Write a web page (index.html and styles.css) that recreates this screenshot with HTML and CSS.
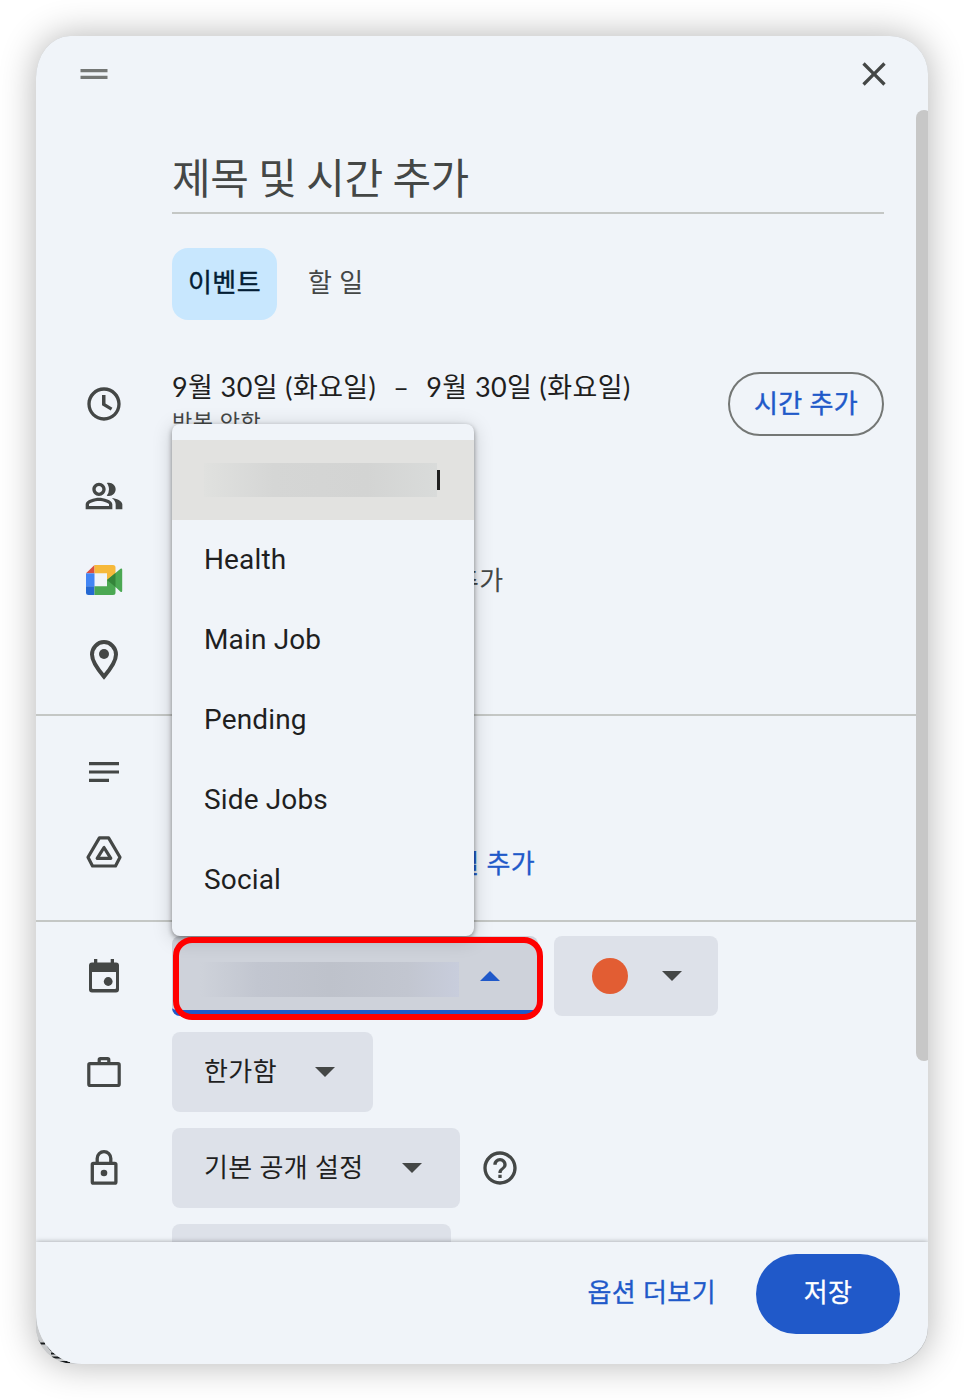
FILE: index.html
```html
<!DOCTYPE html>
<html lang="ko">
<head>
<meta charset="utf-8">
<title>이벤트</title>
<link rel="stylesheet" href="styles.css">
</head>
<body>
<div class="window">
  <svg class="corner" viewBox="0 0 44 60"><path fill="#c9cbcd" d="M0 0h44v60H0z"/><path stroke="#171b1d" stroke-width="2" d="M1 36l2 2M3 39.500h6M12 42l4 5M15 49.500h7M16 53.500h10M22 58h12"/></svg>
  <main class="dialog">
    <header class="header">
      <svg class="handle" viewBox="0 0 28 12"><path fill="#747775" d="M.5 1h27v3.200H.5zM.5 7.700h27V11H.5z"/></svg>
      <svg class="icon" viewBox="0 0 24 24"><path d="M19 6.410L17.590 5 12 10.590 6.410 5 5 6.410 10.590 12 5 17.590 6.410 19 12 13.410 17.590 19 19 17.590 13.410 12z"/></svg>
    </header>
    <div class="content">
      <div class="title"><span>제목 및 시간 추가</span></div>
      <nav class="tabs"><span class="tab selected">이벤트</span><span class="tab">할 일</span></nav>
      <section class="row time">
        <svg class="icon" viewBox="0 0 24 24"><path d="M11.990 2C6.470 2 2 6.480 2 12s4.470 10 9.990 10C17.520 22 22 17.520 22 12S17.520 2 11.990 2zM12 20c-4.420 0-8-3.580-8-8s3.580-8 8-8 8 3.580 8 8-3.580 8-8 8zm.9-13.400h-2.100v6.100l5.250 3.150 1-1.640-4.150-2.450z"/></svg>
        <div class="when">
          <div class="dates"><span>9월 30일 (화요일)</span><span class="dash">–</span><span>9월 30일 (화요일)</span></div>
          <div class="repeat">반복 안함</div>
        </div>
        <span class="add-time">시간 추가</span>
      </section>
      <section class="row">
        <svg class="icon" viewBox="0 0 24 24"><path d="M15 8c0-1.420-.5-2.730-1.330-3.760.42-.14.86-.24 1.330-.24 2.210 0 4 1.790 4 4s-1.790 4-4 4c-.43 0-.84-.09-1.230-.21-.03-.01-.06-.02-.1-.03A5.980 5.980 0 0 0 15 8zm1.660 5.130C18.030 14.060 19 15.320 19 17v3h4v-3c0-2.180-3.580-3.470-6.340-3.870zM9 6c-1.100 0-2 .9-2 2s.9 2 2 2 2-.9 2-2-.9-2-2-2m0-2c2.210 0 4 1.790 4 4s-1.790 4-4 4-4-1.790-4-4 1.790-4 4-4zm0 11c-2.700 0-5.800 1.290-6 2.010V18h12v-1c-.2-.71-3.300-2-6-2m0-2c2.670 0 8 1.340 8 4v3H1v-3c0-2.660 5.330-4 8-4z"/></svg>
      </section>
      <section class="row meet">
        <svg class="icon" viewBox="0 0 40 40"><path fill="#d94f43" d="M2 13.300L10.500 5v8.300z"/><path fill="#4285f4" d="M2 13.300h8.500v13H2z"/><path fill="#2468d2" d="M2 26.300h8.500V35H4.500Q2 35 2 32.500z"/><path fill="#f6b93b" d="M10.500 5H29q2.500 0 2.500 2.500V20H23v-6.700H10.500z"/><path fill="#4ba853" d="M10.500 26.300H23V20l8.500-7L36.500 8.700q1.700-.8 1.700 1v21q0 2-1.700 1L31.500 27v5.500Q31.500 35 29 35H10.500z"/><path fill="#34853a" d="M23 20l8.500-7v14z"/></svg>
        <span class="meet-label">추가</span>
      </section>
      <section class="row">
        <svg class="icon" viewBox="0 0 40 40"><path fill="none" stroke="#444746" stroke-width="4" d="M20 36.600C13 28.500 8 20.800 8 14.600a12 12.500 0 0 1 24 0C32 20.800 27 28.500 20 36.600z"/><circle cx="20" cy="14" r="5"/></svg>
      </section>
      <section class="group">
        <div class="row">
          <svg class="icon" viewBox="0 0 40 40"><path d="M5 10h30v3.200H5zm0 8.400h30v3.200H5zm0 8.300h20V30H5z"/></svg>
        </div>
        <div class="row">
          <svg class="icon" viewBox="0 0 40 40"><path fill="none" stroke="#444746" stroke-width="3.200" stroke-linejoin="round" d="M15.400 5.900h9.200L36 25.300 31.500 34h-23L4 25.300zM20 15.500l-6.800 10.800h13.600z"/></svg>
          <span class="attach">파일 추가</span>
        </div>
      </section>
      <section class="group options">
        <div class="row">
          <svg class="icon" viewBox="0 0 40 40"><path d="M10 3h3.300v3.500h13.400V3H30v3.500h2q3 0 3 3v24q0 3-3 3H8q-3 0-3-3v-24q0-3 3-3h2zM8 16v16q0 1 1 1h22q1 0 1-1V16z"/><circle cx="24.200" cy="25.500" r="4.400"/></svg>
          <div class="select active"><i class="redacted"></i><svg class="arrow blue" viewBox="0 0 20 10"><path d="M0 10L10 0l10 10z"/></svg></div>
          <div class="select color"><i class="dot"></i><svg class="arrow" viewBox="0 0 20 10"><path d="M0 0h20L10 10z"/></svg></div>
        </div>
        <div class="row">
          <svg class="icon" viewBox="0 0 40 40"><path fill="none" stroke="#444746" stroke-width="3.200" stroke-linejoin="round" d="M6 11.700h28q1.200 0 1.200 1.200v19.400q0 1.200-1.200 1.200H6q-1.200 0-1.200-1.200V12.900q0-1.200 1.200-1.200zM15.200 11.500V7.800q0-1.200 1.200-1.200h7.200q1.200 0 1.200 1.200v3.700"/></svg>
          <div class="select busy"><span>한가함</span><svg class="arrow" viewBox="0 0 20 10"><path d="M0 0h20L10 10z"/></svg></div>
        </div>
        <div class="row">
          <svg class="icon" viewBox="0 0 40 40"><path fill="none" stroke="#444746" stroke-width="3.300" stroke-linejoin="round" d="M9.500 15.300h21.200q1.200 0 1.200 1.200v17.500q0 1.200-1.200 1.200H9.500q-1.200 0-1.200-1.200V16.500q0-1.200 1.200-1.200zM13.200 15V10.500a6.800 6.800 0 0 1 13.600 0V15"/><circle cx="20" cy="25" r="3.300"/></svg>
          <div class="select visibility"><span>기본 공개 설정</span><svg class="arrow" viewBox="0 0 20 10"><path d="M0 0h20L10 10z"/></svg></div>
          <svg class="icon help" viewBox="0 0 24 24"><path d="M11 18h2v-2h-2v2zm1-16C6.480 2 2 6.480 2 12s4.480 10 10 10 10-4.480 10-10S17.520 2 12 2zm0 18c-4.410 0-8-3.590-8-8s3.590-8 8-8 8 3.590 8 8-3.590 8-8 8zm0-14c-2.210 0-4 1.790-4 4h2c0-1.100.9-2 2-2s2 .9 2 2c0 2-3 1.750-3 5h2c0-2.250 3-2.500 3-5 0-2.210-1.790-4-4-4z"/></svg>
        </div>
        <div class="row"><div class="select next"></div></div>
      </section>
    </div>
    <footer class="footer"><span class="more">옵션 더보기</span><span class="save">저장</span></footer>
    <div class="scrollbar"></div>
    <div class="menu">
      <div class="item current"><i class="redacted"></i><i class="edge"></i></div>
      <div class="item"><span>Health</span></div>
      <div class="item"><span>Main Job</span></div>
      <div class="item"><span>Pending</span></div>
      <div class="item"><span>Side Jobs</span></div>
      <div class="item"><span>Social</span></div>
    </div>
    <div class="highlight"></div>
  </main>
</div>
</body>
</html>
```
FILE: styles.css
```css
* { box-sizing: border-box; }
body {
  margin: 0;
  padding: 36px;
  height: 1400px;
  overflow: hidden;
  background: #fff;
  color: #1f1f1f;
  font: 26px/36px Roboto, "Noto Sans CJK KR", sans-serif;
  letter-spacing: .4px;
}
span { white-space: nowrap; }
.window {
  position: relative;
  width: 892px;
  height: 1328px;
  border-radius: 34px 38px 38px 38px / 42px 38px 36px 38px;
  box-shadow: 0 0 36px rgba(0, 0, 0, .3);
  background: #bfc1c3;
  overflow: hidden;
}
.corner { position: absolute; left: 0; bottom: 0; width: 44px; height: 60px; }
.dialog {
  position: relative;
  display: flex;
  flex-direction: column;
  height: 100%;
  overflow: hidden;
  background: #f0f4f9;
  border-radius: 0 0 40px 46px / 0 0 38px 52px;
}
.header { display: flex; flex: none; justify-content: space-between; align-items: center; height: 74px; padding: 2px 34px 0 44px; }
.handle { width: 28px; height: 12px; }
.icon { width: 40px; height: 40px; flex: none; fill: #444746; }
.content { flex: 1; min-height: 0; width: 880px; overflow: hidden; }
.title {
  margin-left: 136px;
  width: 712px;
  height: 104px;
  padding-top: 40px;
  border-bottom: 2px solid #c4c7c5;
  color: #444746;
  font-size: 42px;
  line-height: 60px;
  letter-spacing: -.5px;
}
.tabs { display: flex; margin: 34px 0 32px 136px; height: 72px; }
.tab { padding: 17px 16px; border-radius: 16px; color: #444746; }
.tab.selected { width: 105px; margin-right: 15px; background: #c8e7fe; color: #041e35; -webkit-text-stroke: .4px; }
.row { display: flex; align-items: center; height: 80px; padding-left: 136px; }
.row > .icon:first-child { margin-left: -88px; margin-right: 48px; }
.time { height: 104px; padding-right: 32px; }
.when { flex: 1; align-self: flex-start; padding-top: 17px; }
.dates { display: flex; font-family: Lato, "Noto Sans CJK KR", sans-serif; font-size: 27px; letter-spacing: .4px; }
.dash { margin: 0 17px; }
.repeat { margin-top: 3px; color: #444746; font-size: 22px; line-height: 30px; letter-spacing: .6px; }
.add-time {
  width: 156px;
  height: 64px;
  border: 2px solid #747775;
  border-radius: 32px;
  color: #2059c9;
  -webkit-text-stroke: .4px;
  line-height: 60px;
  text-align: center;
}
.meet { margin-top: 4px; }
.meet-label { margin-left: 283px; padding-top: 1px; color: #444746; }
.attach { margin: 24px 0 0 259px; color: #2059c9; -webkit-text-stroke: .3px; }
.group { margin-top: 14px; padding-top: 16px; border-top: 2px solid #c4c7c5; }
.group + .group { margin-top: 28px; padding-top: 14px; }
.options { display: grid; gap: 16px; }
.select {
  display: flex;
  flex: none;
  align-items: center;
  justify-content: space-between;
  height: 80px;
  padding: 0 38px 0 32px;
  border-radius: 8px;
  background: #dde1e9;
}
.select span { padding-bottom: 1px; }
.arrow { width: 20px; height: 10px; fill: #444746; }
.arrow.blue { fill: #2059c9; }
.active { width: 366px; margin-right: 16px; background: #ced2da; border-bottom: 6px solid #2059c9; padding: 6px 38px 0 28px; }
.redacted { width: 259px; height: 35px; background: linear-gradient(90deg, #ced2da 0, #c2c6d0 22%, #bec2cb 50%, #c2c6d0 80%, #c8cddc); }
.active .redacted { margin-top: 6px; }
.color { width: 164px; padding: 0 36px 0 38px; }
.dot { width: 36px; height: 36px; border-radius: 50%; background: #e25d33; }
.busy { width: 201px; }
.visibility { width: 288px; }
.help { margin-left: 20px; }
.next { width: 279px; }
.footer {
  position: relative;
  display: flex;
  flex: none;
  justify-content: flex-end;
  gap: 40px;
  height: 122px;
  padding: 12px 28px;
  background: #f0f4f9;
  box-shadow: 0 0 5px rgba(0, 0, 0, .35);
  -webkit-text-stroke: .3px;
}
.more { color: #2059c9; line-height: 78px; }
.save { width: 144px; height: 80px; border-radius: 40px; background: #2059c9; color: #fff; line-height: 78px; text-align: center; }
.scrollbar { position: absolute; left: 880px; top: 74px; width: 16px; height: 951px; border-radius: 8px; background: #c7c7c7; }
.menu {
  position: absolute;
  left: 136px;
  top: 388px;
  width: 302px;
  height: 512px;
  padding-top: 16px;
  border-radius: 8px;
  background: #f0f4f9;
  box-shadow: 0 2px 5px rgba(0, 0, 0, .4), 0 3px 20px rgba(0, 0, 0, .18);
  font-size: 28px;
  letter-spacing: .15px;
}
.item { display: flex; align-items: center; height: 80px; padding-left: 32px; }
.current { background: #e2e2e0; }
.current .redacted { width: 233px; height: 34px; background: linear-gradient(90deg, #e0e1df, #d5d6d5 30%, #d3d4d3 70%, #d9dbda); }
.edge { width: 3px; height: 20px; background: #1f1f1f; }
.highlight { position: absolute; left: 136.5px; top: 900.5px; width: 370.5px; height: 83.5px; border: 6px solid #f00; border-radius: 19px; }
```
